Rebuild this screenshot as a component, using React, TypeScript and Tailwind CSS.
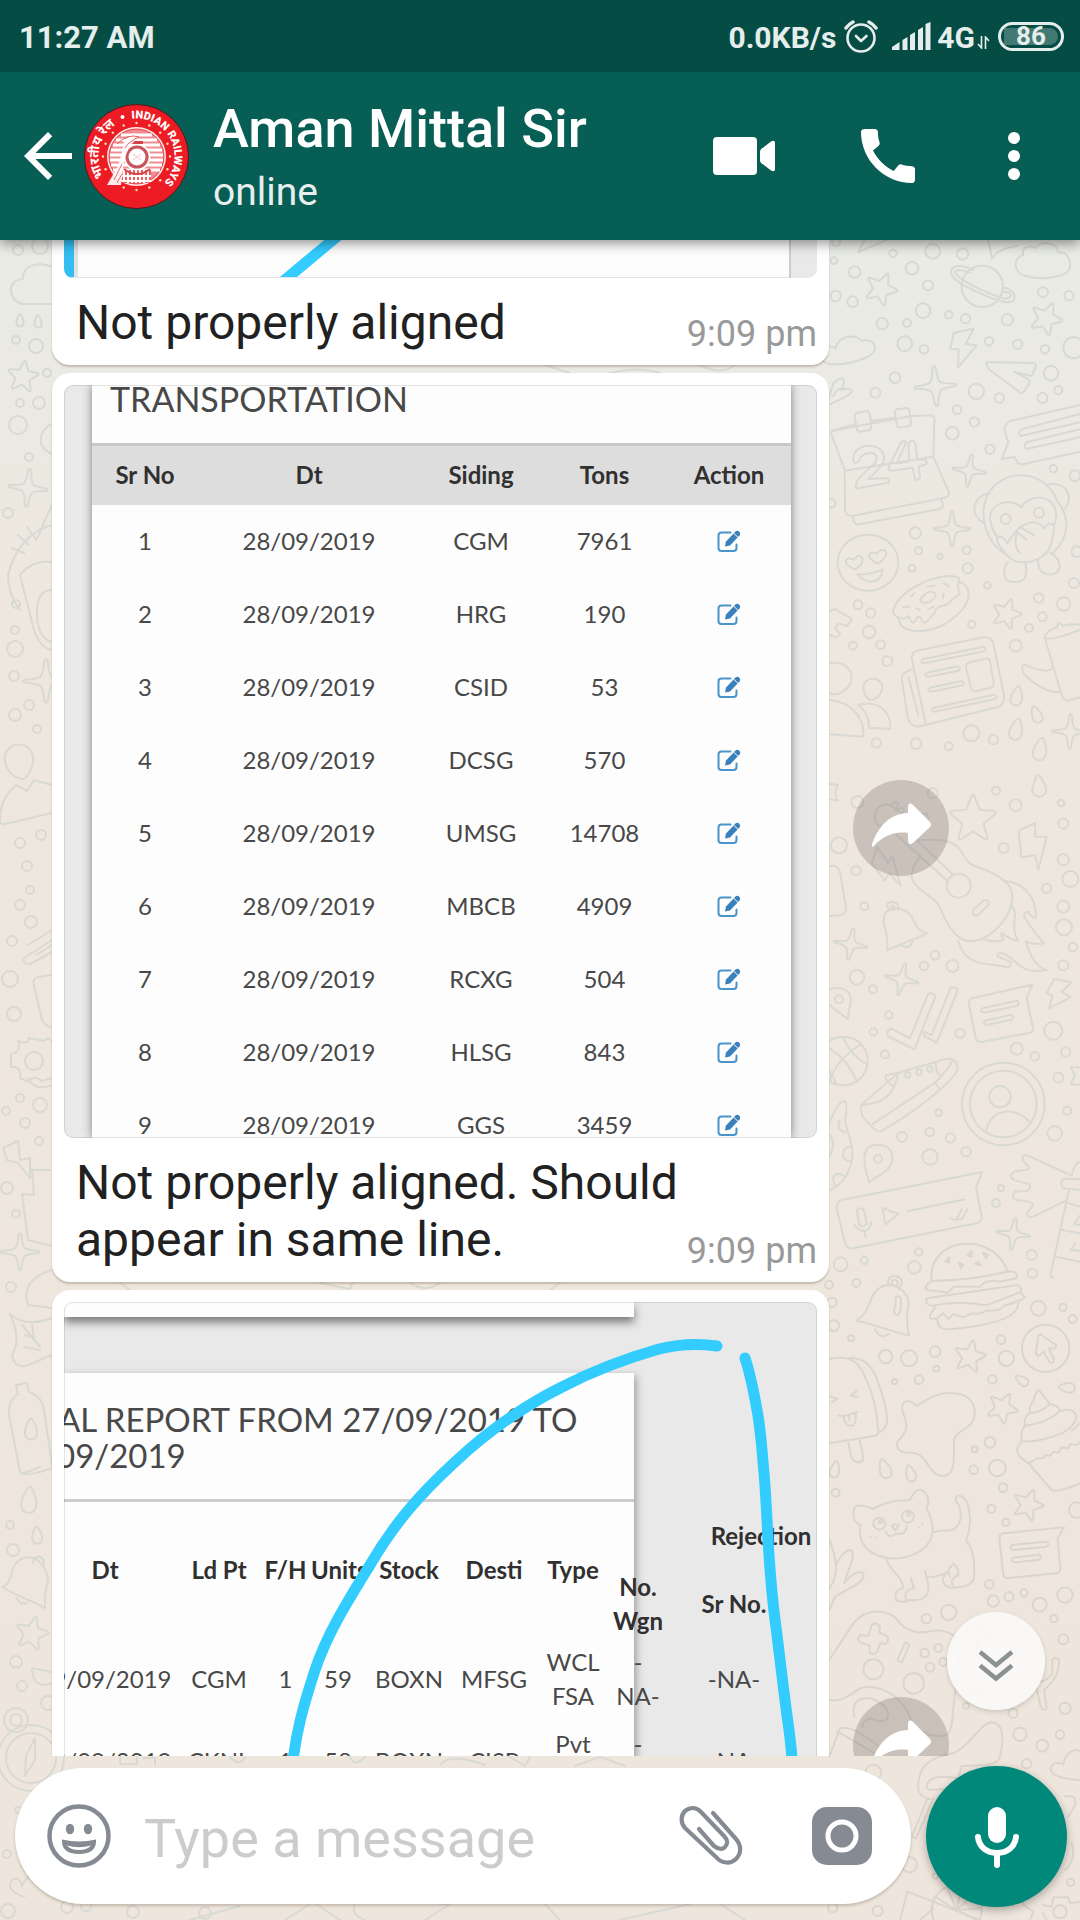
import React from "react";

const sidingRows = [
  ["1", "28/09/2019", "CGM", "7961"],
  ["2", "28/09/2019", "HRG", "190"],
  ["3", "28/09/2019", "CSID", "53"],
  ["4", "28/09/2019", "DCSG", "570"],
  ["5", "28/09/2019", "UMSG", "14708"],
  ["6", "28/09/2019", "MBCB", "4909"],
  ["7", "28/09/2019", "RCXG", "504"],
  ["8", "28/09/2019", "HLSG", "843"],
  ["9", "28/09/2019", "GGS", "3459"],
];

const reportRows = [
  { dt: "29/09/2019", ldPt: "CGM", fh: "1", units: "59", stock: "BOXN", desti: "MFSG", type: ["WCL", "FSA"] },
  { dt: "29/09/2019", ldPt: "CKNL", fh: "1", units: "58", stock: "BOXN", desti: "CISP", type: ["Pvt", "FSA"] },
];

/* ---------- Wallpaper ---------- */

type Point = number[];

function Dots({ at }: { at: Point[] }) {
  return (
    <>
      {at.map(([x, y, r], i) => (
        <circle key={i} cx={x} cy={y} r={r} />
      ))}
    </>
  );
}

function Stars({ at }: { at: Point[] }) {
  return (
    <>
      {at.map(([x, y, s, a], i) => (
        <path
          key={i}
          transform={`translate(${x} ${y}) rotate(${a}) scale(${s})`}
          d="M-3 -46Q0 -51 3 -46L14 -18L44 -15Q50 -13 46 -9L22 11L30 40Q30 46 24 43L0 27L-24 43Q-30 46 -30 40L-22 11L-46 -9Q-50 -13 -44 -15L-14 -18Z"
        />
      ))}
    </>
  );
}

function Sparkles({ at }: { at: Point[] }) {
  return (
    <>
      {at.map(([x, y, s, a], i) => (
        <path
          key={i}
          transform={`translate(${x} ${y}) rotate(${a}) scale(${s})`}
          d="M0 -58Q4 -58 5 -50Q8 -15 16 -11Q24 -7 58 -3Q62 0 58 3Q24 6 15 12Q9 18 4 54Q0 60 -4 54Q-8 18 -15 12Q-24 7 -58 3Q-62 0 -58 -3Q-20 -6 -14 -12Q-8 -18 -5 -50Q-4 -58 0 -58Z"
        />
      ))}
    </>
  );
}

function Drops({ at }: { at: Point[] }) {
  return (
    <>
      {at.map(([x, y, s, a], i) => (
        <path
          key={i}
          transform={`translate(${x} ${y}) rotate(${a}) scale(${s})`}
          d="M0 -34Q5 -34 12 -16C22 4 20 28 0 28C-20 28 -22 4 -12 -16Q-5 -34 0 -34Z"
        />
      ))}
    </>
  );
}

function Wallpaper() {
  return (
    <svg
      aria-hidden="true"
      className="pointer-events-none absolute inset-0 h-full w-full [&_*]:[vector-effect:non-scaling-stroke]"
      viewBox="0 0 1080 1920"
      preserveAspectRatio="xMaxYMin slice"
      fill="none"
      stroke="#d9d9d3"
      strokeWidth="2"
      strokeLinejoin="round"
      strokeLinecap="round"
    >
      <g transform="translate(820 230) scale(0.33333)">
        <Dots
          at={[
            [48, 36, 12], [42, 92, 10], [104, 126, 17], [219, 70, 11], [338, 64, 22], [428, 72, 17], [276, 115, 19], [324, 166, 15],
            [47, 198, 16], [98, 215, 16], [309, 242, 22], [187, 281, 17], [261, 279, 12], [386, 254, 11], [437, 266, 14], [562, 269, 17],
            [669, 187, 15], [747, 197, 14], [254, 341, 22], [312, 358, 13], [507, 334, 13], [593, 343, 14], [675, 358, 13], [762, 353, 32],
            [225, 443, 16], [166, 488, 15], [469, 484, 23], [538, 504, 14], [693, 430, 22], [715, 481, 12], [667, 504, 15], [411, 539, 13],
            [463, 576, 14], [397, 610, 19], [510, 658, 14], [700, 716, 11], [765, 737, 16], [34, 820, 13], [286, 909, 17], [296, 962, 11],
            [360, 979, 8], [440, 961, 12], [276, 1015, 10], [443, 1015, 15], [502, 1066, 10], [770, 965, 16], [762, 1059, 15], [114, 1124, 13],
            [152, 1149, 14], [147, 1206, 19], [99, 1247, 12], [182, 1244, 13], [202, 1293, 15], [455, 1183, 11], [656, 1104, 14], [731, 1122, 20],
            [667, 1160, 13], [627, 1194, 12], [587, 1247, 18], [454, 1510, 24], [520, 1529, 14], [169, 1539, 14], [386, 1549, 12], [289, 1541, 16],
          ]}
        />
        <Stars at={[[184, 175, 1, 24], [679, 264, 1, 24], [560, 1150, 0.92, 18]]} />
        <Sparkles at={[[346, 469, 1.05, -4], [448, 722, 0.85, 8], [396, 897, 0.92, 0], [750, 1505, 0.9, 2]]} />
        <Drops at={[[590, 1400, 0.95, 12], [650, 1455, 0.85, -22], [588, 1500, 1.05, 14], [660, 1560, 1.1, 10]]} />
        <path d="M115 66L145 10M115 66L200 30M515 85Q512 50 500 20M515 85Q535 55 592 48" />
        <path d="M618 138C580 130 575 85 610 75C600 50 635 45 645 55C665 30 710 35 715 67C745 65 755 95 748 118C735 145 655 150 618 138Z" />
        <circle cx="487" cy="169" r="62" />
        <path d="M460 120C420 100 385 105 395 135C410 165 530 215 565 217C595 215 590 180 548 172M450 128C420 115 395 120 410 135C440 165 530 200 555 206C580 205 578 185 550 185" />
        <path d="M8 370C10 350 35 345 47 355C55 315 110 310 125 333C150 325 170 340 164 360C150 395 30 415 12 395Q3 385 8 370Z" />
        <path d="M401 309L461 296L437 342L470 346L414 412L416 358L391 357ZM500 396L640 399Q650 401 647 410L638 433Q634 440 625 436L583 426L622 446Q632 451 628 460L612 484Q606 492 598 486L510 420Q495 404 500 396Z" />
        <path d="M28 500L40 460Q60 440 70 447Q75 455 65 480Q85 472 97 482Q90 498 28 523M40 498Q50 475 70 475" />
        <path d="M38 602L108 582M152 573L226 563M274 558L333 556Q345 558 343 570L340 680L386 785Q390 798 375 803L100 857Q78 860 75 842L74 720L34 613Q32 604 38 602ZM74 722L340 680M98 858L102 875Q106 885 118 883L355 838Q372 834 368 820L362 806" />
        <path d="M112 548L140 543Q148 545 150 555L154 590Q153 600 145 601L118 605Q112 604 110 596L104 560Q105 550 112 548ZM230 538L260 534Q268 536 269 545L273 578Q272 588 265 589L240 593Q232 592 230 585L225 548Q225 540 230 538Z" />
        <path d="M100 690C95 640 185 630 192 680C195 705 165 725 145 748L198 744Q212 750 205 758L115 775Q105 775 109 760C115 730 170 710 170 685C170 660 125 665 118 692Q105 705 100 690ZM244 636Q255 630 258 640L230 700L268 695L265 640Q275 626 285 637L292 690L315 688Q325 697 315 705L296 708L300 740Q296 754 285 748L278 713L215 722Q202 720 207 708Z" />
        <path d="M780 525L575 572Q552 580 554 600L565 638L545 687L584 681L592 698Q600 706 612 702L780 665M780 552L605 598Q592 608 602 618L780 577M780 598L620 637Q608 647 620 657L780 622" />
        <path d="M500 800C540 715 670 710 710 810M500 800C480 850 490 935 560 975M710 810C750 860 750 920 700 967" />
        <path d="M510 790C460 795 445 850 490 878M680 765C735 750 765 800 735 835M603 832C570 800 505 820 510 870C515 900 530 920 535 922M603 832C640 780 715 800 708 865Q706 885 697 885" />
        <path d="M532 920Q550 918 563 940Q590 895 612 885Q650 865 672 895Q690 870 702 888Q700 930 690 950C670 1000 590 1010 565 980C550 960 525 940 532 920ZM590 910Q580 950 600 970M600 892L642 915M590 905L620 930" />
        <circle cx="557" cy="867" r="15" />
        <circle cx="657" cy="848" r="15" />
        <path d="M565 995C545 1020 550 1055 575 1055C615 1060 625 1040 615 995M655 990C650 1025 680 1040 705 1030C730 1015 720 985 690 967" />
        <ellipse cx="144" cy="998" rx="91" ry="84" />
        <path d="M104 1018Q75 1005 77 993Q85 980 101 989Q113 970 126 982Q135 1000 104 1018ZM175 1001Q147 990 147 974Q155 964 170 971Q180 955 197 962Q205 980 175 1001ZM112 1033Q150 1035 187 1018Q185 1055 150 1055Q125 1050 112 1033Z" />
        <path d="M219 1147C225 1080 370 1020 415 1043C425 1055 405 1065 419 1088C415 1105 400 1095 390 1118C370 1135 350 1120 344 1148C325 1165 320 1185 308 1175C300 1155 290 1155 285 1175C275 1185 270 1165 265 1158C250 1175 225 1160 219 1147ZM235 1162C240 1220 330 1205 370 1185C430 1150 460 1105 440 1070Q430 1060 419 1055" />
        <path d="M300 1110Q325 1075 345 1090Q350 1105 325 1117Q305 1122 300 1110ZM323 1069L345 1067M273 1100L285 1088M250 1131L267 1130M288 1136L300 1140M325 1138L340 1130M369 1105L371 1090M372 1060L386 1070" />
        <path d="M28 1143L45 1137L88 1162Q98 1168 92 1175L80 1188L55 1180L45 1198L60 1210L50 1223L28 1215" />
        <path d="M290 1262L490 1222Q516 1220 520 1240L552 1395Q555 1425 530 1432L300 1489Q270 1495 262 1455L245 1345Q245 1325 282 1317M275 1285Q275 1268 290 1262M275 1285L317 1480M265 1340L295 1457" />
        <path d="M308 1288L490 1250Q502 1255 493 1264L312 1300Q298 1298 308 1288ZM320 1328L412 1309Q425 1314 416 1322L324 1340Q308 1338 320 1328ZM330 1373L424 1353Q436 1358 428 1366L334 1385Q318 1383 330 1373ZM342 1433L522 1394Q535 1398 526 1407L344 1445Q328 1443 342 1433ZM450 1297L500 1285Q508 1285 510 1295L522 1360Q522 1370 512 1373L468 1384Q456 1384 453 1374L438 1312Q438 1300 450 1297Z" />
        <path d="M674 1223Q680 1200 712 1192Q712 1175 722 1180L727 1187Q770 1180 780 1185M674 1223Q690 1235 780 1200M674 1223L725 1395Q732 1415 750 1411L780 1402M697 1307C700 1330 660 1325 613 1304Q600 1310 612 1333C650 1370 690 1387 720 1387" />
        <path d="M28 1300C85 1290 110 1335 85 1370Q60 1400 28 1390M28 1410C90 1415 135 1460 130 1520L28 1513M130 1372C130 1340 185 1335 187 1372C185 1395 165 1410 155 1410C145 1410 130 1395 130 1372ZM115 1425C170 1410 215 1440 211 1497L147 1493C147 1460 135 1440 115 1425Z" />
      </g>

      <g transform="translate(820 780) scale(0.33333)">
        <Dots
          at={[
            [112, 66, 18], [528, 32, 12], [587, 76, 18], [723, 69, 10], [730, 131, 15], [57, 196, 24], [108, 272, 14], [551, 204, 15], [730, 239, 17],
            [751, 297, 24], [680, 325, 14], [133, 379, 12], [730, 380, 18], [732, 442, 24], [759, 501, 13], [730, 556, 15], [345, 526, 13], [312, 558, 13],
            [397, 558, 18], [111, 592, 22], [159, 628, 12], [206, 705, 11], [160, 756, 11], [195, 823, 12], [420, 760, 14], [700, 752, 27], [590, 806, 18],
            [645, 829, 13], [737, 816, 14], [715, 893, 15], [742, 992, 12], [356, 998, 10], [246, 1071, 15], [329, 1056, 13], [391, 1074, 14], [438, 1115, 14],
            [330, 1131, 23], [704, 1060, 22], [543, 1225, 9], [528, 1269, 12], [62, 1453, 21], [133, 1441, 11], [296, 1416, 11], [283, 1462, 19], [635, 1425, 15],
            [637, 1480, 14], [338, 40, 15],
          ]}
        />
        <Stars at={[[459, 115, 1.45, 0]]} />
        <Sparkles at={[[92, 493, 0.85, 10], [245, 598, 0.85, 12], [580, 1362, 0.85, 8]]} />
        <path d="M28 12L53 14L45 38L53 62L28 58M28 258Q55 255 60 275L79 390Q75 410 28 407M640 40C630 30 645 10 648 -12Q655 -18 662 -8C675 10 682 30 675 42Q655 60 640 40Z" />
        <path d="M596 152L646 129L645 170L680 170L655 270L645 226L604 232ZM172 200L205 250L217 228L242 317L208 280L194 302L155 250Z" />
        <path d="M165 110C165 80 195 65 215 78L245 100M165 110Q165 140 190 140M215 75Q225 60 236 70L228 92M235 90Q245 78 252 88L248 105M300 105Q325 90 325 115L310 130M230 165L385 305M290 180L400 285" />
        <path d="M285 180C340 180 395 170 425 215C455 280 490 250 550 300C610 340 560 440 490 475C420 505 390 450 365 395C350 345 300 345 277 300C270 265 290 245 300 230" />
        <circle cx="416" cy="317" r="36" />
        <path d="M460 390L492 360Q505 358 507 372L475 405Q462 412 458 398ZM550 303C610 305 650 350 648 415Q630 410 625 395Q610 395 613 410C630 440 655 470 672 490Q640 495 618 485Q640 560 680 570C600 585 600 545 550 520Q530 515 533 530L570 545Q580 560 560 562C510 545 440 570 414 482M575 380Q590 390 583 430Q580 460 595 483Q565 475 545 460Q540 465 550 480Q520 490 485 475" />
        <path d="M201 511C210 460 180 430 195 400C215 375 260 385 275 410C290 445 300 455 321 460C290 475 250 490 201 511ZM245 497Q270 510 278 482M204 385Q195 365 218 366Q240 370 234 388" />
        <circle cx="218" cy="384" r="6" />
        <path d="M28 628C70 615 95 635 92 665L83 717L28 675" />
        <circle cx="57" cy="658" r="12" />
        <path d="M212 745L270 775L325 640Q345 640 346 650L283 808L203 768Q198 755 212 745ZM310 755L335 765L392 622Q412 622 413 632L350 788L313 768Z" />
        <path d="M455 655L637 614L620 655L639 745Q640 755 630 758L485 786Q470 787 467 775L446 668Q446 658 455 655ZM487 685L590 662Q600 668 592 677L492 698Q478 695 487 685ZM496 722L573 704Q583 710 575 719L500 735Q486 732 496 722ZM702 597L755 607L724 635L752 652L687 685L698 647L680 640Z" />
        <circle cx="70" cy="843" r="73" />
        <path d="M28 905Q50 835 125 792M70 775Q95 830 140 852M28 805Q85 840 110 903M28 873L50 912" />
        <path d="M124 975C185 970 220 955 235 878L198 885Q190 900 222 920M235 878L375 838C410 830 425 860 400 890C350 945 260 1010 190 1050Q175 1060 160 1045L128 1010Q120 985 124 975ZM158 1032L345 908Q385 870 398 840M345 908L358 925M348 850Q345 875 360 885" />
        <circle cx="263" cy="885" r="8" />
        <circle cx="297" cy="876" r="8" />
        <circle cx="330" cy="867" r="8" />
        <circle cx="550" cy="972" r="124" />
        <circle cx="550" cy="972" r="100" />
        <circle cx="540" cy="950" r="32" />
        <path d="M498 1053C515 980 590 980 630 1028M780 862L752 862L765 886L752 912L780 914" />
        <path d="M28 1030Q50 970 72 962Q85 965 75 1020C80 1060 100 1080 97 1130C90 1190 60 1215 28 1232M60 1022Q45 1045 75 1058M95 1100Q65 1100 70 1130Q75 1145 95 1143M75 1190Q50 1170 38 1195L45 1220M28 1065Q50 1090 28 1130" />
        <path d="M148 1208C125 1140 125 1095 172 1094C225 1095 225 1140 205 1165C190 1185 165 1190 148 1208Z" />
        <circle cx="174" cy="1137" r="12" />
        <path d="M65 1260L487 1176L468 1222L486 1315Q483 1325 470 1330L100 1405Q80 1407 75 1390L50 1285Q50 1265 65 1260ZM187 1284L235 1302L197 1333ZM262 1294L434 1258M392 1315L408 1321L425 1288M415 1318L425 1318L443 1286" />
        <path d="M110 1290Q125 1278 132 1292L140 1330Q130 1348 118 1335ZM102 1333Q115 1355 135 1353Q155 1345 153 1325M132 1353L137 1372" />
        <path d="M755 1187L620 1125Q605 1125 608 1140L628 1162Q625 1172 595 1172Q565 1180 575 1195Q590 1205 628 1212Q635 1225 620 1233L585 1235Q570 1255 590 1260Q640 1265 640 1275L620 1300Q625 1315 640 1310L738 1262M755 1187Q762 1150 780 1145M780 1197L730 1197Q718 1210 730 1225L780 1230M747 1230L692 1480Q690 1490 700 1495M740 1268L780 1280M725 1350L780 1360M708 1430L780 1445M780 1307L762 1332L780 1335M765 1390L752 1410L780 1412" />
      </g>

      <g transform="translate(820 1240) scale(0.33333)" stroke="#dbd6cb">
        <Dots
          at={[
            [109, 129, 12], [27, 134, 12], [36, 187, 14], [41, 257, 16], [93, 295, 9], [655, 205, 22], [729, 202, 11], [758, 237, 12], [197, 350, 20],
            [267, 355, 24], [345, 335, 16], [349, 386, 9], [297, 419, 13], [224, 425, 8], [543, 299, 13], [559, 355, 23], [517, 418, 13], [510, 607, 16],
            [464, 628, 9], [461, 689, 13], [532, 684, 25], [549, 743, 13], [514, 807, 12], [558, 847, 11], [47, 758, 12], [770, 810, 23], [508, 1033, 13],
            [520, 1083, 17], [567, 1070, 14], [612, 1059, 11], [735, 1065, 23], [659, 1094, 21], [702, 1136, 11], [386, 1117, 23], [319, 1136, 14],
          ]}
        />
        <Stars at={[[450, 348, 0.98, 12], [548, 502, 0.95, 28], [625, 793, 0.95, 20]]} />
        <Drops at={[[44, 690, 0.8, 15], [195, 688, 0.95, -20], [272, 702, 0.8, -15], [607, 422, 0.7, -55], [742, 443, 0.8, -85]]} />
        <path d="M335 123C320 -10 520 -30 562 93M335 123Q460 120 562 95Q595 90 590 115L540 125Q500 115 480 140L400 140Q385 165 365 155L320 150Q310 140 335 123M320 175L595 135Q610 145 600 157L498 196Q420 180 335 197Q315 195 320 175ZM600 157L615 172Q610 180 550 198Q540 215 500 212Q480 225 455 220L430 232L400 222L385 237L370 220L350 235Q325 240 330 225L345 202M352 235Q350 270 390 268Q595 250 595 190" />
        <path d="M376 65L388 52L388 68ZM443 45L455 34L455 50ZM489 38L504 45L497 55ZM415 68L430 75L423 84ZM466 72L473 65L484 76Z" />
        <path d="M109 242C160 210 140 165 185 140C215 125 260 145 266 190C260 230 258 250 268 286C225 280 160 250 109 242ZM165 268Q180 300 207 282M205 137Q200 108 224 108Q250 110 244 135L236 147M228 170Q240 165 243 180Q245 215 235 224Q222 228 222 210Q230 190 226 178Z" />
        <circle cx="224" cy="128" r="9" />
        <circle cx="677" cy="325" r="71" />
        <path d="M655 285Q660 280 668 288L708 315Q710 322 702 325L686 326L703 360Q700 372 690 368L670 335L660 346Q650 350 648 340Z" />
        <path d="M28 357C90 345 115 365 130 400C165 470 170 520 175 575Q175 585 160 588L28 610M90 353C130 355 150 370 170 415C190 465 205 525 200 550Q195 570 175 578M85 608L95 655Q110 675 128 662Q132 655 119 600M28 468L52 477L35 487M110 453L92 467L115 470M56 527Q80 530 113 515M70 530Q75 560 95 557Q110 555 107 520M86 525L88 540" />
        <path d="M250 490Q265 475 290 497C320 480 350 455 400 460C450 460 475 500 460 540C450 570 400 570 402 610C400 650 410 705 370 708C325 710 325 640 275 638Q225 640 232 605C270 570 260 550 250 520Q243 500 250 490Z" />
        <path d="M630 520Q625 500 640 485Q645 455 657 450L688 490Q680 510 630 520Q610 530 615 558M688 492Q715 495 720 512Q690 545 615 558Q600 575 605 603M722 513Q760 500 770 530Q765 560 725 580Q665 605 605 605Q570 640 627 670M780 550L755 572M627 670L650 655L670 655L675 645L690 647L700 635L715 638L725 622L745 625L750 612L770 615L780 605M630 675L695 750Q705 760 780 730" />
        <path d="M120 855Q90 840 105 800Q125 790 158 807C200 785 230 780 270 780Q285 745 305 750Q335 770 320 808C365 890 320 940 240 955C150 960 110 910 122 855M340 877Q355 870 380 872C430 870 430 810 408 783Q405 765 420 767C450 775 460 850 438 900C460 930 465 960 462 1015Q455 1040 415 1042Q370 1050 368 1015L400 970Q415 980 415 1005Q390 1015 398 1035M200 960C215 1000 245 1005 250 1045Q220 1050 228 1080Q250 1090 270 1080Q330 1085 325 1035L315 992M325 1012Q360 1010 385 995L390 1010M272 1013L282 1045Q250 1050 258 1078" />
        <circle cx="178" cy="851" r="18" />
        <circle cx="182" cy="845" r="5" />
        <circle cx="264" cy="830" r="18" />
        <circle cx="267" cy="822" r="5" />
        <path d="M215 857Q225 850 237 855L226 871ZM197 875Q210 900 228 880Q255 890 260 858M152 891L152 892M166 892L166 893M296 860L296 861M307 852L307 853" />
        <path d="M550 880L732 862L713 895L721 985Q720 998 710 1000L565 1014Q553 1015 550 1005L538 895Q538 883 550 880ZM575 915L680 905Q690 913 680 920L578 930Q568 925 575 915ZM580 953L657 944Q667 951 658 959L583 967Q570 962 580 953Z" />
        <path d="M28 900Q45 940 48 975Q70 930 90 930Q105 935 95 965L72 1030Q110 985 130 1000Q135 1015 115 1030L45 1070M48 975Q50 1015 28 1045M45 1070L28 1110" />
      </g>

      <g transform="translate(820 1560) scale(0.33333)" stroke="#dbd6cb">
        <Dots
          at={[
            [730, 238, 15], [735, 445, 17], [579, 460, 14], [600, 523, 20], [667, 557, 18], [720, 524, 13], [620, 611, 14], [438, 438, 9], [160, 328, 30],
            [281, 370, 31], [314, 279, 13], [355, 264, 12], [330, 322, 13], [370, 306, 12], [38, 1043, 14], [173, 1052, 15], [268, 914, 23], [346, 948, 8],
            [752, 967, 11], [160, 638, 24], [468, 390, 16], [516, 405, 10], [577, 190, 17],
          ]}
        />
        <Sparkles at={[[480, 220, 0.7, 10]]} />
        <path d="M28 300L100 190C140 140 210 145 240 190C280 230 320 215 340 212C390 210 420 230 420 270L405 400C395 470 400 510 380 525C330 540 270 500 270 470C240 400 170 370 120 385Q60 430 28 420" />
        <path d="M155 195Q168 185 180 200L178 217L200 228Q210 240 197 252L180 250L172 275Q160 287 148 278L150 258L122 248Q108 240 120 225L145 228ZM256 247L269 253L245 308L232 302ZM103 470Q90 410 150 415Q200 430 205 465Q200 495 150 475Q120 490 130 500M28 590L60 505Q90 495 150 540Q185 560 180 580M52 515Q100 540 170 585M625 225L600 235L605 270Q590 340 650 385L662 440Q670 455 680 447L672 390Q720 350 717 300Q705 285 697 300L697 340Q680 365 655 365" />
        <path d="M295 690C290 620 330 590 400 580C450 560 480 490 515 487C555 490 550 545 540 590Q535 610 500 615L425 618L415 655Q340 640 322 670Q315 690 335 690L410 685M340 715L290 830M295 690Q300 710 330 718M320 720L275 832L290 835M692 630Q695 600 730 613Q740 570 770 570L780 575M692 630Q700 655 780 660M735 710Q770 700 765 735L745 770M735 930Q770 900 755 850M240 1080L262 995L480 1080M300 1080L340 1045" />
        <circle cx="410" cy="1050" r="75" />
        <path d="M410 1050L345 1010M410 1050L380 980M410 1050L425 977M410 1050L465 1000M410 1050L484 1045M410 1050L470 1080M555 1035L580 1035L597 1005L612 1035L640 1055L630 1080M670 1035L695 1040L700 1012L745 1012L750 1030L780 1025M668 1060L680 1080" />
        <circle cx="720" cy="1055" r="20" />
      </g>

      {/* Left edge */}
      <Dots
        at={[
          [18, 250, 5], [40, 246, 8], [16, 340, 4], [36, 346, 7], [47, 373, 4], [20, 403, 4], [39, 403, 6], [18, 425, 9], [29, 457, 4], [8, 513, 5], [16, 604, 4],
          [15, 630, 4], [15, 649, 8], [14, 676, 5], [29, 705, 5], [15, 715, 6], [37, 729, 4], [20, 843, 5], [41, 835, 5], [27, 866, 5], [30, 890, 4], [20, 905, 5],
          [31, 922, 6], [12, 941, 5], [10, 979, 8], [14, 1014, 7], [20, 1098, 4], [40, 1105, 7], [6, 1111, 4], [25, 1123, 5], [39, 1141, 4], [7, 1188, 6], [16, 1214, 4],
          [11, 1287, 5], [10, 1525, 4], [13, 1550, 6], [16, 1662, 6], [22, 1686, 5], [48, 1703, 7], [7, 1854, 4], [8, 1911, 7], [67, 1907, 6], [86, 1906, 5], [133, 1912, 6],
          [205, 1913, 6], [18, 1810, 3],
        ]}
      />
      <Stars at={[[23, 376, 0.32, 8], [32, 1633, 0.34, 14]]} />
      <Sparkles at={[[28, 488, 0.33, 6], [46, 681, 0.38, 0], [20, 1252, 0.32, 0]]} />
      <Drops at={[[20, 321, 0.2, 0], [38, 322, 0.2, -5], [29, 1501, 0.42, 4], [37, 1536, 0.28, -4], [31, 1430, 0.34, 0]]} />
      <path d="M52 304H22C8 300 6 280 23 279C22 263 42 262 52 267M52 424C40 430 34 446 52 454M52 505C42 525 40 535 36 540M52 525C30 530 14 550 8 575C8 590 12 600 20 610M12 548L24 553M18 535L29 545M27 527L35 538M20 575C28 565 40 560 52 562M20 575L34 630Q40 648 52 650M52 590C38 590 35 605 38 625Q42 640 52 642" />
      <path d="M52 1085Q35 1092 28 1078M3 1148L18 1141L20 1160L30 1158L30 1178L18 1163L7 1160ZM30 1170L50 1170M34 1195L22 1194L28 1240L52 1246M34 1195L32 1168" />
      <path d="M5 760C3 742 30 738 33 757C34 770 25 780 22 779C15 778 6 772 5 760ZM16 785L27 791L34 780L52 785M16 785C5 795 0 805 0 820Q0 825 5 824L52 813" />
      <path d="M28 945L52 930M24 958L52 940M24 958Q22 964 30 964L52 952M36 955L52 945M52 975L38 977Q32 978 34 986L42 1020Q46 1027 52 1027" />
      <path d="M18 1041Q28 1045 29 1038L40 1040Q44 1042 48 1038L52 1041M18 1041Q22 1052 11 1054L11 1067Q22 1066 20 1078L28 1082Q34 1074 42 1081L52 1078" />
      <circle cx="34" cy="1061" r="9" />
      <path d="M52 1270Q20 1280 28 1305L52 1308M10 1314Q25 1328 52 1318M10 1314Q22 1340 12 1355Q15 1370 28 1365L52 1355M22 1325L40 1347M25 1335L34 1338L32 1325M24 1347L40 1350" />
      <path d="M16 1385L27 1383L29 1392Q42 1396 44 1410L52 1465M16 1385L18 1394Q8 1400 9 1415L20 1472Q24 1478 52 1468M22 1474L40 1467" />
      <path d="M2 1587Q10 1585 13 1568C22 1550 45 1555 48 1580Q44 1595 45 1608C30 1600 15 1595 2 1587ZM33 1563Q34 1556 40 1557Q46 1560 43 1567M17 1598Q20 1606 27 1603M32 1668L52 1672M32 1668Q33 1685 44 1685L52 1683" />
      <circle cx="31" cy="1758" r="33" />
      <circle cx="31" cy="1758" r="25" />
      <circle cx="16" cy="1720" r="12" />
      <circle cx="16" cy="1720" r="6" />
      <path d="M35 1738L35 1760L25 1776L26 1756ZM24 1897Q5 1890 12 1880Q20 1876 22 1886Q28 1872 34 1880" />
      <path d="M190 1920L240 1906M285 1920L310 1904M316 1904L340 1920M355 1904Q350 1915 365 1920M425 1920L450 1904L440 1904M545 1904L560 1920M620 1920L690 1904M720 1904L745 1920" />
      <path d="M120 1757V1764H137V1757M143 1758H155V1765M230 1757Q240 1768 245 1757M350 1757Q355 1768 365 1757M440 1765Q450 1752 485 1765M510 1757L525 1766L530 1757M575 1766L600 1757L625 1766M545 365L570 373M610 373Q640 366 660 373M700 365Q720 376 735 365M120 1283L130 1290M320 1283L350 1289L352 1283M410 1283Q425 1293 440 1283M550 1290L560 1283" />
    </svg>
  );
}

/* ---------- Header ---------- */

function StatusBar() {
  return (
    <div className="flex h-[72px] items-center justify-between bg-[#054d44] pl-[19px] pr-4 pb-3 pt-3 text-[#e6eeed]">
      <span className="pt-1 text-[31px] font-bold leading-[44px]">11:27 AM</span>
      <div className="flex items-center">
        <span className="pt-1 text-[30px] font-bold leading-[44px]">0.0KB/s</span>
        <svg className="ml-2 h-[34px] w-[34px]" viewBox="0 0 34 34" fill="none" stroke="currentColor" strokeWidth="2.6" strokeLinecap="round" strokeLinejoin="round">
          <circle cx="17" cy="19" r="13.5" />
          <path d="M12 17L17 22L22.500 17" />
          <path d="M2 9Q5 5 9 3M25 3Q29 5 32 9" strokeWidth="3.5" />
        </svg>
        <svg className="ml-[14px] h-7 w-[39px]" viewBox="0 0 39 28" fill="currentColor">
          <path d="M0 28V25L7.500 20V28ZM10.500 28V18L15.500 15V28ZM18 28V13L23 10V28ZM26 28V8L31 5V28ZM33.500 28V2L38.500 0V28Z" />
        </svg>
        <span className="ml-[6px] pt-1 text-[30px] font-bold leading-[44px]">4G</span>
        <svg className="ml-[2px] mt-[13px] h-[13px] w-[13px]" viewBox="0 0 13 13" fill="none" stroke="currentColor" strokeWidth="1.6">
          <path d="M4.500 0V12L1 8M8.500 13V1L12 5" />
        </svg>
        <span className="ml-[8px] flex h-[29px] w-[66px] items-center rounded-full border-3 border-current p-[3px]">
          <span className="flex h-full w-full items-center justify-center rounded-l-sm rounded-r-full bg-white/25 text-[26px] font-bold leading-none">86</span>
        </span>
      </div>
    </div>
  );
}

function RailwayLogo() {
  const dots = Array.from({ length: 16 }, (_, i) => (i * Math.PI) / 8);
  return (
    <svg className="size-[105px] shrink-0" viewBox="0 0 105 105" role="img" aria-label="Indian Railways emblem">
      <defs>
        <path id="ring" d="M52.500 90.500A38 38 0 1 1 52.600 90.500" />
      </defs>
      <circle cx="52.500" cy="52.500" r="52" fill="#ed1c24" stroke="#4a1a1c" strokeWidth="1" />
      <text fontFamily="Roboto, sans-serif" fontSize="11" fontWeight="900" fill="#fff">
        <textPath href="#ring" startOffset="48%">INDIAN RAILWAYS</textPath>
      </text>
      <text fontFamily="'Noto Sans', 'Noto Sans Devanagari', sans-serif" fontSize="13" fontWeight="700" fill="#fff">
        <textPath href="#ring" startOffset="16%">भारतीय रेल</textPath>
      </text>
      <circle cx="38.500" cy="13" r="2" fill="#fff" />
      {dots.map((a) => (
        <circle key={a} cx={52.5 + 33.5 * Math.cos(a)} cy={52.5 + 33.5 * Math.sin(a)} r="1.200" fill="#ffd9b0" />
      ))}
      <circle cx="52.500" cy="52.500" r="29.500" fill="#fbeaea" />
      <circle cx="52.500" cy="52.500" r="27.500" fill="#ef8d92" stroke="#ed1c24" strokeWidth="0.800" />
      <path d="M37 31H68M32 36H73M29 41H76M27 46H78M26 51H79M26 56H79M27 61H78M29 66H76" stroke="#fff" strokeWidth="3" />
      <path d="M38 66H67V79H38Z" fill="#ed5a60" />
      <path d="M40 66V78M44 66V79M48 66V79M52 66V79M56 66V79M60 66V79M64 66V78M38 72H67M38 77H67" stroke="#fff" strokeWidth="2" />
      <circle cx="53" cy="53" r="12.500" fill="#c9545b" stroke="#fff" strokeWidth="1.800" />
      <path d="M40 65Q46 70 53 70Q60 70 66 65" fill="none" stroke="#d8434b" strokeWidth="1.800" />
      <circle cx="53" cy="53" r="8.500" fill="#fff" />
      <path d="M49 50L57 56M57 50L49 56" stroke="#f8d4d6" strokeWidth="1.200" />
      <path d="M47 37H59V40H47Z" fill="#d8434b" />
      <path d="M23 81L34 62Q38 50 40 37L50 29L55 33Q43 42 40 58L37 81Z" fill="#fff" opacity=".9" />
      <path d="M33 40Q44 29 55 33Q45 37 41 44" fill="none" stroke="#ed5a60" strokeWidth="1" />
      <path d="M30 76L38 60M33 79L38 70" stroke="#ed6a6f" strokeWidth="1" fill="none" />
    </svg>
  );
}

function ChatHeader() {
  return (
    <div className="flex h-[168px] items-center bg-[#075e54] pl-3 pr-[30px] text-white">
      <button type="button" aria-label="Back" className="shrink-0">
        <svg className="size-[72px]" viewBox="0 0 24 24" fill="currentColor">
          <path d="M20 11H7.830l5.590-5.590L12 4l-8 8 8 8 1.410-1.410L7.830 13H20v-2z" />
        </svg>
      </button>
      <RailwayLogo />
      <div className="ml-6 min-w-0 flex-1">
        <h1 className="truncate text-[54px] font-medium leading-[64px]">Aman Mittal Sir</h1>
        <p className="mt-2 text-[39px] leading-[46px] text-[#e6efee]">online</p>
      </div>
      <button type="button" aria-label="Video call" className="shrink-0">
        <svg className="size-[72px]" viewBox="0 0 72 72" fill="currentColor">
          <rect x="5" y="17" width="44" height="38" rx="4" />
          <path d="M52 31.500Q52 30 53.200 29L63 21.500Q67 19.500 67 23V49Q67 52.500 63 50.500L53.200 43Q52 42 52 40.500Z" />
        </svg>
      </button>
      <button type="button" aria-label="Voice call" className="ml-[72px] shrink-0">
        <svg className="size-[72px]" viewBox="0 0 24 24" fill="currentColor">
          <path d="M20.010 15.380c-1.230 0-2.420-.2-3.530-.56-.35-.12-.74-.03-1.010.24l-1.570 1.970c-2.830-1.350-5.480-3.900-6.890-6.830l1.950-1.660c.27-.28.35-.67.24-1.020-.37-1.110-.56-2.300-.56-3.530 0-.54-.45-.99-.99-.99H4.190C3.650 3 3 3.240 3 3.990 3 13.280 10.730 21 20.010 21c.71 0 .99-.63.99-1.180v-3.450c0-.54-.45-.99-.99-.99z" />
        </svg>
      </button>
      <button type="button" aria-label="More options" className="ml-[54px] shrink-0">
        <svg className="size-[72px]" viewBox="0 0 24 24" fill="currentColor">
          <circle cx="12" cy="6" r="2" />
          <circle cx="12" cy="12" r="2" />
          <circle cx="12" cy="18" r="2" />
        </svg>
      </button>
    </div>
  );
}

/* ---------- Messages ---------- */

function Message({ children, forward = false, className = "" }: { children: React.ReactNode; forward?: boolean; className?: string }) {
  return (
    <li className="flex items-center gap-6">
      <article className={"w-[777px] bg-white shadow-[0_2px_2px_rgba(120,100,80,0.35)] " + className}>{children}</article>
      {forward && (
        <button type="button" aria-label="Forward" className="size-24 shrink-0 rounded-full bg-[#736b67]/30 text-white">
          <svg viewBox="0 0 96 96" fill="currentColor">
            <path d="M55 28Q55 21 60 25L77 42Q79 45 77 47L60 63Q55 66 55 60V53C40 51 29 57 21 66Q18 68 19 64C25 48 35 34 55 33Z" />
          </svg>
        </button>
      )}
    </li>
  );
}

function Caption({ children }: { children: React.ReactNode }) {
  return (
    <div className="flex items-end justify-between px-3 pb-[10px] pt-4">
      <p className="pb-1 pl-3 text-[48px] leading-[57px] text-[#212121]">{children}</p>
      <time className="shrink-0 text-[36px] leading-[42px] text-[#999999]">9:09 pm</time>
    </div>
  );
}

function EditIcon() {
  return (
    <svg className="mx-auto size-6" viewBox="0 0 24 24" fill="none" stroke="#4a94cc" strokeWidth="2" strokeLinecap="round">
      <path d="M13.500 3.500H4.500Q1.500 3.500 1.500 6.500V19Q1.500 22 4.500 22H16.500Q19.500 22 19.500 19V15.500" />
      <path d="M8 17.500L9 12.500L18.500 2.500Q20.500 1 22.500 3Q24 4.500 22.500 6.500L13 16.500Z" fill="#3a80bd" stroke="none" />
      <path d="M17 4.500L21 8.300" stroke="#fff" strokeWidth="1" />
    </svg>
  );
}

function SidingTable() {
  return (
    <div className="mx-3 h-[753px] overflow-hidden rounded-[9px] bg-[#e9e9e9] pl-7 pr-[26px] font-['Lato',sans-serif] text-[#484848] outline outline-1 -outline-offset-1 outline-black/10">
      <div className="h-full bg-[#fdfdfd] shadow-[0_0_9px_rgba(0,0,0,0.45)]">
        <h2 className="h-[58px] pl-[18px] text-[34px] leading-[28px]">TRANSPORTATION</h2>
        <table className="w-full table-fixed border-collapse border-t-3 border-[#c8c8c8] text-center text-[24px] leading-7">
          <colgroup>
            <col className="w-[106px]" />
            <col className="w-[222px]" />
            <col className="w-[122px]" />
            <col className="w-[125px]" />
            <col className="w-[124px]" />
          </colgroup>
          <thead>
            <tr className="h-[60px] bg-[#dddddd] text-[#303030]">
              {["Sr No", "Dt", "Siding", "Tons", "Action"].map((h) => (
                <th key={h} className="font-bold">{h}</th>
              ))}
            </tr>
          </thead>
          <tbody>
            {sidingRows.map((row) => (
              <tr key={row[0]} className="h-[73px]">
                {row.map((cell, i) => (
                  <td key={i}>{cell}</td>
                ))}
                <td>
                  <button type="button" aria-label={"Edit row " + row[0]} className="block w-full">
                    <EditIcon />
                  </button>
                </td>
              </tr>
            ))}
          </tbody>
        </table>
      </div>
    </div>
  );
}

function ReportTable() {
  return (
    <div className="relative mx-3 h-[753px] overflow-hidden rounded-[9px] bg-[#e9e9e9] font-['Lato',sans-serif] text-[#484848] outline outline-1 -outline-offset-1 outline-black/10">
      <div className="h-[15px] w-[570px] bg-[#fdfdfd] shadow-[0_5px_10px_rgba(0,0,0,0.5)]" />
      <div className="mt-14 h-[720px] w-[570px] bg-[#fdfdfd] shadow-[2px_3px_8px_rgba(0,0,0,0.35)]">
        <div className="flex h-[129px] flex-col items-start border-b-3 border-[#cccccc] pt-7 text-[33px] leading-9">
          <p className="-ml-[6px] whitespace-nowrap">AL REPORT FROM 27/09/2019 TO</p>
          <p className="-ml-[8px] whitespace-nowrap">09/2019</p>
        </div>
        <table className="-ml-8 w-[879px] table-fixed border-collapse text-center text-[24px] leading-[34px]">
          <colgroup>
            <col className="w-[146px]" />
            <col className="w-[82px]" />
            <col className="w-[51px]" />
            <col className="w-[54px]" />
            <col className="w-[88px]" />
            <col className="w-[82px]" />
            <col className="w-[76px]" />
            <col className="w-[54px]" />
            <col className="w-[138px]" />
            <col className="w-[108px]" />
          </colgroup>
          <thead className="text-[#303030] [&_th]:font-bold">
            <tr className="h-[68px]">
              {["Dt", "Ld Pt", "F/H", "Units", "Stock", "Desti", "Type"].map((h) => (
                <th key={h} rowSpan={2} className="whitespace-nowrap">{h}</th>
              ))}
              <th colSpan={3}>Rejection</th>
            </tr>
            <tr className="h-[68px]">
              <th>No. Wgn</th>
              <th>Sr No.</th>
              <th />
            </tr>
          </thead>
          <tbody>
            {reportRows.map((r, i) => (
              <tr key={i} className="h-[82px]">
                <td>{r.dt}</td>
                <td>{r.ldPt}</td>
                <td>{r.fh}</td>
                <td>{r.units}</td>
                <td>{r.stock}</td>
                <td>{r.desti}</td>
                <td>
                  {r.type[0]}
                  <br />
                  {r.type[1]}
                </td>
                <td>
                  -<br />
                  NA-
                </td>
                <td>-NA-</td>
                <td />
              </tr>
            ))}
          </tbody>
        </table>
      </div>
      <svg aria-hidden="true" className="pointer-events-none absolute left-0 top-0 h-[753px] w-[753px]" viewBox="0 0 753 753" fill="none" stroke="#33ccff" strokeWidth="11" strokeLinecap="round" strokeLinejoin="round">
        <path d="M653 44C632 41 615 42 595 47C560 57 525 71 498 85C460 104 425 128 391 160C355 193 330 222 306 263C285 297 264 330 251 368C238 408 233 428 229 458L226 490" />
        <path d="M681 56C687 74 690 91 693 108C697 129 698 150 700 171C702 195 703 216 704 238C706 270 708 297 712 325C716 356 718 375 721 398C724 423 727 437 728 458" />
      </svg>
    </div>
  );
}

/* ---------- Composer ---------- */

function Composer() {
  return (
    <form className="relative z-10 flex h-[164px] shrink-0 items-center gap-[15px] pb-1 pl-[15px] pr-[13px]" onSubmit={(e) => e.preventDefault()}>
      <div className="flex h-[136px] min-w-0 flex-1 items-center rounded-full bg-white pl-8 pr-[39px] text-[#868b93] shadow-[0_2px_3px_rgba(120,100,80,0.35)]">
        <button type="button" aria-label="Emoji" className="shrink-0">
          <svg className="size-16" viewBox="0 0 64 64" fill="none" stroke="currentColor" strokeWidth="4.500">
            <circle cx="32" cy="32" r="29.500" />
            <g fill="currentColor" stroke="none">
              <ellipse cx="23" cy="25" rx="4.200" ry="5.200" />
              <ellipse cx="41" cy="25" rx="4.200" ry="5.200" />
              <path d="M15 35.500Q32 39.500 49 35.500Q50 50 32 50Q14 50 15 35.500Z" />
            </g>
            <path d="M20 41.500Q32 45 44 41.500Q40 46 32 46Q24 46 20 41.500Z" fill="#fff" stroke="none" />
          </svg>
        </button>
        <input
          type="text"
          aria-label="Type a message"
          placeholder="Type a message"
          className="ml-[33px] h-[74px] min-w-0 flex-1 bg-transparent pt-1 text-[54px] text-[#212121] outline-none placeholder:text-[#cccccc] placeholder:opacity-100"
        />
        <button type="button" aria-label="Attach" className="mr-[69px] shrink-0">
          <svg className="h-[62px] w-16" viewBox="0 0 64 62" fill="none" stroke="currentColor" strokeWidth="4.200" strokeLinecap="round" strokeLinejoin="round">
            <path d="M34 8L57 34C63 41 62 49 57 54C52 59 43 59 37 52L6 23C1 17 2 10 6 6C11 2 17 2 22 7L45 31C49 35 49 39 46 42C43 45 39 44 35 41L20 24" />
          </svg>
        </button>
        <button type="button" aria-label="Camera" className="shrink-0">
          <svg className="size-[60px]" viewBox="0 0 60 60">
            <rect x="0" y="1" width="60" height="58" rx="15" fill="currentColor" />
            <circle cx="30" cy="30" r="14" fill="none" stroke="#fff" strokeWidth="5" />
          </svg>
        </button>
      </div>
      <button type="button" aria-label="Record voice message" className="size-[141px] shrink-0 rounded-full bg-[#00897b] shadow-[0_3px_8px_rgba(0,0,0,0.3)]">
        <svg viewBox="0 0 141 141" fill="none" stroke="#fff" strokeWidth="6" strokeLinecap="round">
          <rect x="62" y="41" width="18" height="36" rx="9" fill="#fff" stroke="none" />
          <path d="M52 71C53 81 61 87 71 87C81 87 89 81 90 71M71 88V99" />
        </svg>
      </button>
    </form>
  );
}

export default function App() {
  return (
    <div className="relative flex h-screen flex-col overflow-hidden bg-linear-to-b from-[#e9ebe5] from-[13%] via-[#eee7de] via-[34%] to-[#eee6dd] font-['Roboto',sans-serif]">
      <Wallpaper />
      <header className="relative z-20 shrink-0 shadow-[0_3px_12px_rgba(0,0,0,0.45)]">
        <StatusBar />
        <ChatHeader />
      </header>

      <main className="relative min-h-0 flex-1 overflow-hidden">
        <ul className="flex flex-col gap-2 pl-[52px]">
          <Message className="rounded-b-[18px]">
            <div className="mx-3 h-[38px] overflow-hidden rounded-b-[9px] bg-[#e9e9e9] pr-[26px]">
              <svg aria-hidden="true" className="h-[38px] w-full" viewBox="0 0 727 38" preserveAspectRatio="xMinYMin slice">
                <rect width="727" height="38" fill="#fdfdfd" />
                <path d="M10 0H14V38H10Z" fill="#e2e2e2" />
                <path d="M0 0H10V38H0Z" fill="#33bdf0" />
                <path d="M276 -6L216 44" stroke="#33ccff" strokeWidth="11" />
                <path d="M0 37.500H727" stroke="#e4e4e4" />
                <path d="M726 0V38" stroke="#cccccc" strokeWidth="2" />
              </svg>
            </div>
            <Caption>Not properly aligned</Caption>
          </Message>

          <Message forward className="rounded-[18px] pt-3">
            <SidingTable />
            <Caption>Not properly aligned. Should appear in same line.</Caption>
          </Message>

          <Message forward className="min-h-[909px] rounded-[18px] pt-3">
            <ReportTable />
          </Message>
        </ul>

        <button type="button" aria-label="Scroll to latest" className="absolute bottom-[46px] right-[35px] size-[98px] rounded-full bg-[#fbfaf9]/90 text-[#8c9293] shadow-[0_2px_5px_rgba(0,0,0,0.15)]">
          <svg viewBox="0 0 98 98" fill="none" stroke="currentColor" strokeWidth="4.500">
            <path d="M33 40L49 53L65 40M33 53.500L49 66.500L65 53.500" />
          </svg>
        </button>
      </main>

      <Composer />
    </div>
  );
}
